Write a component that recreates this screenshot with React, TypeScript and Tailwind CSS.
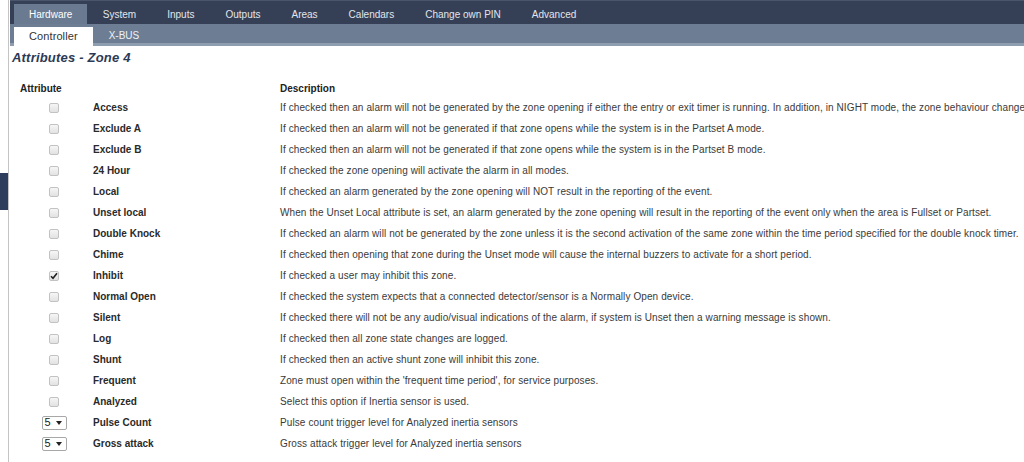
import React from "react";

type Row = { label: string; desc: string; kind: "cb" | "cbx" | "sel" };

const rows: Row[] = [
  { label: "Access", kind: "cb", desc: "If checked then an alarm will not be generated by the zone opening if either the entry or exit timer is running. In addition, in NIGHT mode, the zone behaviour changes to that of an Entry/Exit zone." },
  { label: "Exclude A", kind: "cb", desc: "If checked then an alarm will not be generated if that zone opens while the system is in the Partset A mode." },
  { label: "Exclude B", kind: "cb", desc: "If checked then an alarm will not be generated if that zone opens while the system is in the Partset B mode." },
  { label: "24 Hour", kind: "cb", desc: "If checked the zone opening will activate the alarm in all modes." },
  { label: "Local", kind: "cb", desc: "If checked an alarm generated by the zone opening will NOT result in the reporting of the event." },
  { label: "Unset local", kind: "cb", desc: "When the Unset Local attribute is set, an alarm generated by the zone opening will result in the reporting of the event only when the area is Fullset or Partset." },
  { label: "Double Knock", kind: "cb", desc: "If checked an alarm will not be generated by the zone unless it is the second activation of the same zone within the time period specified for the double knock timer." },
  { label: "Chime", kind: "cb", desc: "If checked then opening that zone during the Unset mode will cause the internal buzzers to activate for a short period." },
  { label: "Inhibit", kind: "cbx", desc: "If checked a user may inhibit this zone." },
  { label: "Normal Open", kind: "cb", desc: "If checked the system expects that a connected detector/sensor is a Normally Open device." },
  { label: "Silent", kind: "cb", desc: "If checked there will not be any audio/visual indications of the alarm, if system is Unset then a warning message is shown." },
  { label: "Log", kind: "cb", desc: "If checked then all zone state changes are logged." },
  { label: "Shunt", kind: "cb", desc: "If checked then an active shunt zone will inhibit this zone." },
  { label: "Frequent", kind: "cb", desc: "Zone must open within the 'frequent time period', for service purposes." },
  { label: "Analyzed", kind: "cb", desc: "Select this option if Inertia sensor is used." },
  { label: "Pulse Count", kind: "sel", desc: "Pulse count trigger level for Analyzed inertia sensors" },
  { label: "Gross attack", kind: "sel", desc: "Gross attack trigger level for Analyzed inertia sensors" },
];

const navTabs = ["Hardware", "System", "Inputs", "Outputs", "Areas", "Calendars", "Change own PIN", "Advanced"];

function Checkbox({ checked }: { checked: boolean }) {
  return (
    <div className="w-[10px] h-[10px] border border-[#c2c2c2] rounded-[2px] bg-[linear-gradient(to_bottom,#f6f6f6,#e2e2e2)] flex items-center justify-center">
      {checked && (
        <svg width="8" height="8" viewBox="0 0 8 8">
          <path d="M1 4.2 L3 6.3 L7 1.2" fill="none" stroke="#222" strokeWidth="1.6" />
        </svg>
      )}
    </div>
  );
}

function Select() {
  return (
    <div className="w-[25px] h-[14px] border border-[#a8a8a8] rounded-[2px] bg-white flex items-center justify-between pl-[2px] pr-[4px] text-[11px] text-[#222] leading-none">
      <span>5</span>
      <svg width="6" height="4" viewBox="0 0 6 4">
        <path d="M0 0 L6 0 L3 4 Z" fill="#222" />
      </svg>
    </div>
  );
}

export default function App() {
  return (
    <div className="w-[1024px] h-[462px] overflow-hidden bg-white flex font-['Liberation_Sans',Arial,sans-serif]">
      <div className="w-[8px] shrink-0 flex flex-col pt-[173px]">
        <div className="h-[37px] bg-[#2f3d5c]" />
      </div>
      <div className="flex-1 min-w-0 flex flex-col border-l border-[#c4c4c4]">
        <div className="ml-[1px] h-[24px] bg-[#353f56] border-t border-[#4a556c] flex items-end pl-[4px] shrink-0">
          {navTabs.map((t, i) => (
            <div
              key={t}
              className={
                i === 0
                  ? "h-[20px] px-[15px] flex items-center text-[10px] text-white bg-[#6a7a90]"
                  : "h-[20px] px-[15.5px] flex items-center text-[10px] text-[#e2e6ec]"
              }
            >
              {t}
            </div>
          ))}
        </div>
        <div className="ml-[1px] h-[22px] bg-[linear-gradient(to_bottom,#6d7d93_0px,#6d7d93_19px,#8f9db1_19px,#8f9db1_22px)] flex items-end pl-[4px] shrink-0">
          <div className="h-[19px] px-[15px] flex items-center bg-white text-[11px] text-[#333] tracking-[0.1px]">
            Controller
          </div>
          <div className="h-[19px] px-[16px] flex items-center text-[10px] text-[#eef1f5] pb-[2px]">X-BUS</div>
        </div>
        <div className="pl-[3px] pt-[4px] h-[20px] text-[13px] leading-[16px] italic font-bold text-[#2c3a55] tracking-[0.2px]">
          Attributes - Zone 4
        </div>
        <div className="mt-[15px] grid grid-cols-[84px_187px_1fr] h-[16px] items-center text-[10px] font-bold text-[#222] leading-none">
          <div className="pl-[11px]">Attribute</div>
          <div />
          <div>Description</div>
        </div>
        {rows.map((r) => (
          <div key={r.label} className="grid grid-cols-[84px_187px_1fr] h-[21px] items-center text-[10px] leading-none">
            <div className="flex">
              <div className="w-[90px] shrink-0 flex justify-center">
                {r.kind === "sel" ? <Select /> : <Checkbox checked={r.kind === "cbx"} />}
              </div>
            </div>
            <div className="font-bold text-[#2a2a2a] whitespace-nowrap">{r.label}</div>
            <div className="text-[#3a3a3a] whitespace-nowrap tracking-[0.1px]">{r.desc}</div>
          </div>
        ))}
      </div>
    </div>
  );
}
